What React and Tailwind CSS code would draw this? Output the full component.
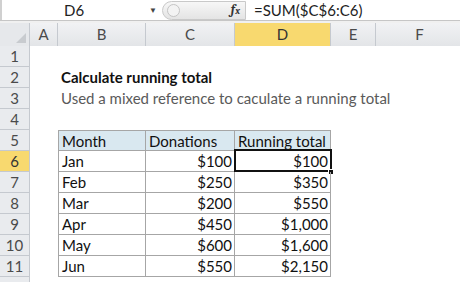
const cols = ['A', 'B', 'C', 'D', 'E', 'F'];

const rows = [
  { n: 1 },
  { n: 2, title: 'Calculate running total' },
  { n: 3, sub: 'Used a mixed reference to caculate a running total' },
  { n: 4 },
  { n: 5, head: ['Month', 'Donations', 'Running total'] },
  { n: 6, data: ['Jan', '$100', '$100'] },
  { n: 7, data: ['Feb', '$250', '$350'] },
  { n: 8, data: ['Mar', '$200', '$550'] },
  { n: 9, data: ['Apr', '$450', '$1,000'] },
  { n: 10, data: ['May', '$600', '$1,600'] },
  { n: 11, data: ['Jun', '$550', '$2,150'] },
  { n: 12, hidden: true },
];

const grid = 'grid grid-cols-[30px_28px_88px_89px_96px_45px_88px]';

function RowLabel({ n, hidden }) {
  const active = n === 6;
  return (
    <div
      className={`flex h-[21px] items-center justify-center border-r border-b border-[#c5c9cf] text-[15px] ${
        active ? 'bg-[#f8d96f] text-[#333]' : 'bg-[#e9ebee] text-[#4a4a4a]'
      }`}
    >
      {hidden ? '' : n}
    </div>
  );
}

function Row({ row }) {
  if (row.head) {
    return (
      <div className={grid}>
        <RowLabel n={row.n} />
        <div />
        {row.head.map((h, i) => (
          <div
            key={h}
            className={`h-[21px] border-t border-r border-b border-[#a6a6a6] bg-[#d9e8f0] pl-[3px] leading-[20px] text-[#111] ${i === 0 ? 'border-l' : ''}`}
          >
            {h}
          </div>
        ))}
      </div>
    );
  }
  if (row.data) {
    const [m, d, r] = row.data;
    return (
      <div className={grid}>
        <RowLabel n={row.n} />
        <div />
        <div className="h-[21px] border-r border-b border-l border-[#a6a6a6] pl-[3px] leading-[20px] text-[#111]">{m}</div>
        <div className="h-[21px] border-r border-b border-[#a6a6a6] pr-[2px] text-right leading-[20px] text-[#111]">{d}</div>
        <div className="relative h-[21px] border-r border-b border-[#a6a6a6] pr-[2px] text-right leading-[20px] text-[#111]">
          {r}
          {row.n === 6 && (
            <>
              <div className="absolute -top-[2px] -left-[1px] -right-[2px] -bottom-[1px] border-2 border-[#111]" />
              <div className="absolute -right-[4px] -bottom-[4px] h-[6px] w-[6px] border border-white bg-[#111]" />
            </>
          )}
        </div>
      </div>
    );
  }
  return (
    <div className={grid}>
      <RowLabel n={row.n} hidden={row.hidden} />
      <div />
      <div className="col-span-5 h-[21px] whitespace-nowrap pl-[3px] leading-[21px]">
        {row.title && <span className="font-bold text-[#111]">{row.title}</span>}
        {row.sub && <span className="text-[#5a5a5a]">{row.sub}</span>}
      </div>
    </div>
  );
}

export default function App() {
  return (
    <div
      className="h-[282px] w-[460px] overflow-hidden bg-white text-[15px]"
      style={{ fontFamily: 'Lato, "Open Sans", sans-serif' }}
    >
      {/* formula bar */}
      <div className="flex h-[21px] items-center border-b border-[#c6c6c6] bg-white">
        <div className="flex h-full w-[162px] items-center border-l-2 border-[#d0d0d0]">
          <span className="ml-[62px] text-[#222]">D6</span>
          <span className="ml-auto mr-[5px] text-[8px] text-[#444]">▼</span>
        </div>
        <div className="flex h-[19px] w-[84px] items-center rounded-l-full border border-[#c9c9c9] bg-gradient-to-b from-[#f7f7f7] to-[#e4e4e4]">
          <div className="ml-[4px] h-[13px] w-[13px] rounded-full border border-[#c4c4c4] bg-[#f3f3f3]" />
          <span className="ml-auto mr-[5px] font-serif text-[13px] font-bold italic text-[#333]">
            f<span className="text-[10px]">x</span>
          </span>
        </div>
        <span className="ml-[8px] text-[#222]">=SUM($C$6:C6)</span>
      </div>
      {/* column header */}
      <div className="h-[2px] bg-[#f0f0f0]" />
      <div className={`${grid} h-[23px] border-b border-[#b8bcc2]`}>
        <div className="relative border-r border-[#c5c9cf] bg-[#e6e8eb]">
          <div className="absolute right-[3px] bottom-[3px] h-0 w-0 border-l-[10px] border-t-[10px] border-l-transparent border-t-transparent border-r-0 border-b-[10px] border-b-[#c8cbcf]" />
        </div>
        {cols.map((c) => (
          <div
            key={c}
            className={`flex items-center justify-center border-r border-[#c5c9cf] text-[15px] ${
              c === 'D' ? 'bg-[#f8d96f] text-[#333]' : 'bg-gradient-to-b from-[#f1f2f4] to-[#e3e5e8] text-[#4a4a4a]'
            }`}
          >
            {c}
          </div>
        ))}
      </div>
      {rows.map((row) => (
        <Row key={row.n} row={row} />
      ))}
    </div>
  );
}
